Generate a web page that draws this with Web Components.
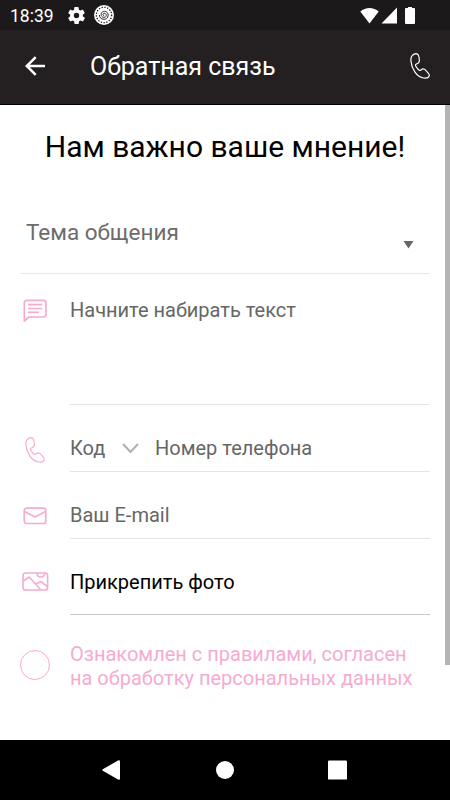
<!DOCTYPE html>
<html lang="ru">
<head>
<meta charset="utf-8">
<title>Обратная связь</title>
<style>
body{
    margin: 0;
    font-family: Roboto, "Noto Sans", sans-serif;
    background: #fff;
}
</style>
</head>
<body>
<feedback-screen></feedback-screen>

<script>
const ICONS = {
    back: `<svg width="20" height="20" viewBox="0 0 20 20" fill="none" stroke="currentColor" stroke-width="2.5"><path d="M20 10H2M10.7 1.2L1.8 10L10.7 18.8"/></svg>`,
    phone: `<svg width="20" height="26" viewBox="0 0 60 78" fill="none" stroke="currentColor" stroke-width="3.6" stroke-linejoin="round"><path d="M3 25C1 12 7 3 18 2C25 2 28 12 28 23C28 29 25 31 19 33C14 36 17 40 22 46C27 53 31 54 34 50C39 46 43 47 48 53C53 58 58 63 58 67C57 73 50 76 41 75C20 73 5 47 3 25Z"/></svg>`,
    chat: `<svg width="25" height="24" viewBox="0 0 25 24" fill="none" stroke="currentColor" stroke-width="1.7" stroke-linejoin="round"><path d="M1.3 22V4Q1.3 1.3 4 1.3H20.3Q23 1.3 23 4V15.3Q23 18 20.3 18H5.8ZM5 5.7H19.3M5 9.5H19.3M5 13.3H16"/></svg>`,
    mail: `<svg width="24" height="18" viewBox="0 0 24 18" fill="none" stroke="currentColor" stroke-width="1.7" stroke-linejoin="round"><rect x="1.2" y="1.2" width="21.6" height="15.3" rx="2.5"/><path d="M1.8 4.8L12 10L22.2 4.8"/></svg>`,
    photo: `<svg width="27" height="19" viewBox="0 0 27 19" fill="none" stroke="currentColor" stroke-width="1.6" stroke-linejoin="round"><rect x="1" y="1" width="24.6" height="17" rx="2.6"/><path d="M1.2 9L7.2 5L18.5 17.5M13.2 12L19 9.7L25.4 14.5M14.8 1.2C15.5 6.3 22 6.3 23 1.2"/></svg>`
};

class UiIcon extends HTMLElement{
    connectedCallback(){
        this.attachShadow({mode: "open"}).innerHTML = `
        <style>
        :host{ display: inline-flex; }
        svg{ display: block; }
        </style>
        ${ICONS[this.getAttribute("name")]}
        `;
    }
}

class StatusBar extends HTMLElement{
    connectedCallback(){
        this.attachShadow({mode: "open"}).innerHTML = `
        <style>
        :host{
            display: flex;
            align-items: center;
            height: 30px;
            padding: 0 35px 0 10px;
            background: #1c191a;
            color: #fff;
            font-size: 17.5px;
            box-sizing: border-box;
        }
        svg{ display: block; flex: none; }
        .time{ width: 58px; line-height: 30px; padding-top: 1px; }
        .gear{ margin-right: 9px; }
        .wifi{ margin-left: auto; }
        .signal{ margin: 0 7px 0 2px; }
        </style>
        <span class="time">18:39</span>
        <svg class="gear" width="17" height="17" viewBox="2 2 20 20" fill="currentColor"><path d="M19.4 13a7.8 7.8 0 0 0 0-2l2.1-1.6a.5.5 0 0 0 .1-.7l-2-3.4a.5.5 0 0 0-.6-.2l-2.5 1a7.3 7.3 0 0 0-1.7-1l-.4-2.6a.5.5 0 0 0-.5-.5h-4a.5.5 0 0 0-.5.5L9.200 5.100a7.7 7.7 0 0 0-1.700 1L5 5.100a.5.5 0 0 0-.6.2l-2 3.400a.5.5 0 0 0 .1.7L4.600 11a8 8 0 0 0 0 2l-2.100 1.600a.5.5 0 0 0-.1.7l2 3.400a.5.5 0 0 0 .6.2l2.500-1a7.300 7.300 0 0 0 1.700 1l.4 2.600a.5.5 0 0 0 .5.5h4a.5.5 0 0 0 .5-.5l.4-2.600a7.700 7.700 0 0 0 1.700-1l2.500 1a.5.5 0 0 0 .6-.2l2-3.400a.5.5 0 0 0-.1-.7zM12 15.200a3.200 3.200 0 1 1 0-6.400a3.200 3.200 0 0 1 0 6.400z"/></svg>
        <svg width="20" height="20" viewBox="0 0 20 20" fill="none" stroke="#fff"><circle cx="10" cy="10" r="10" fill="#fff" stroke="none"/><circle cx="10" cy="10" r="7.7" stroke="#1c191a" stroke-width="1.3" stroke-dasharray="1.3 1.5"/><path stroke="#1c191a" stroke-width=".9" d="M10 10.500C8.500 10.500 8.600 8.300 10.300 8.300C13 8.300 12.900 12.400 10 12.400C6 12.400 6.200 6.300 10.300 6.300C15.500 6.300 15.500 14.300 10 14.300C7 14.300 5.400 12.400 5.400 10"/></svg>
        <svg class="wifi" width="19" height="17" viewBox="0 0 19 17" fill="currentColor"><path d="M9.500 16.500L.3 4.500C5.500-.3 13.500-.3 18.700 4.500Z"/></svg>
        <svg class="signal" width="17" height="17" viewBox="0 0 17 17" fill="currentColor"><path d="M16 .5V16.500H.5Z"/></svg>
        <svg width="10" height="17" viewBox="0 0 10 17" fill="currentColor"><path d="M3 1V0H7V1H9Q10 1 10 2V16Q10 17 9 17H1Q0 17 0 16V2Q0 1 1 1Z"/></svg>
        `;
    }
}

class AppBar extends HTMLElement{
    connectedCallback(){
        this.attachShadow({mode: "open"}).innerHTML = `
        <style>
        :host{
            display: flex;
            align-items: center;
            height: 75px;
            padding: 0 20px 3px 25px;
            background: #242021;
            border-bottom: 1px solid #000;
            color: #fff;
            box-sizing: border-box;
        }
        .title{ flex: 1; margin-left: 45px; padding-top: 3px; font-size: 25px; line-height: 30px; }
        </style>
        <ui-icon name="back"></ui-icon>
        <span class="title"><slot></slot></span>
        <ui-icon name="phone"></ui-icon>
        `;
    }
}

class TopicSelect extends HTMLElement{
    connectedCallback(){
        this.attachShadow({mode: "open"}).innerHTML = `
        <style>
        :host{
            display: flex;
            justify-content: space-between;
            height: 84px;
            padding: 28px 16px 0 6px;
            border-bottom: 1px solid #e8e8e8;
            box-sizing: border-box;
            color: #6c6c6c;
            font-size: 22.5px;
            line-height: 28px;
        }
        svg{ margin-top: 22px; }
        </style>
        <slot></slot>
        <svg width="11" height="9" viewBox="0 0 11 9"><path d="M.5 1H10.500L5.500 8.500Z" fill="#666"/></svg>
        `;
    }
}

class FormRow extends HTMLElement{
    connectedCallback(){
        this.attachShadow({mode: "open"}).innerHTML = `
        <style>
        :host{
            display: flex;
            height: var(--h, 67px);
            color: #666;
            font-size: 20px;
            line-height: 24px;
        }
        .icon{
            width: 50px;
            display: flex;
            justify-content: center;
            padding-right: 20px;
            padding-top: var(--icon-top, 32px);
            box-sizing: border-box;
            color: #f4acd0;
        }
        .field{
            flex: 1;
            display: flex;
            padding-top: var(--top, 31px);
            border-bottom: 1px solid var(--line, #e4e4e4);
        }
        </style>
        <div class="icon"><ui-icon name="${this.getAttribute("icon")}"></ui-icon></div>
        <div class="field"><slot></slot></div>
        `;
    }
}

class PhoneInput extends HTMLElement{
    connectedCallback(){
        this.attachShadow({mode: "open"}).innerHTML = `
        <style>
        :host{ display: flex; }
        .code{ width: 52px; }
        svg{ margin: 7px 16px 0 0; }
        </style>
        <span class="code"><slot name="code"></slot></span>
        <svg width="17" height="11" viewBox="0 0 17 11" fill="none" stroke="#b0b0b0" stroke-width="2"><path d="M1 1L8.500 9L16 1"/></svg>
        <slot></slot>
        `;
    }
}

class ConsentCheck extends HTMLElement{
    connectedCallback(){
        this.attachShadow({mode: "open"}).innerHTML = `
        <style>
        :host{
            display: flex;
            padding-top: 27px;
            color: #f4acd0;
            font-size: 20px;
            line-height: 24px;
        }
        .box{
            width: 30px;
            height: 30px;
            margin: 8px 20px 0 0;
            border: 1px solid currentColor;
            border-radius: 50%;
            box-sizing: border-box;
        }
        </style>
        <div class="box"></div>
        <div><slot></slot></div>
        `;
    }
}

class NavButtons extends HTMLElement{
    connectedCallback(){
        this.attachShadow({mode: "open"}).innerHTML = `
        <style>
        :host{
            display: flex;
            align-items: center;
            justify-content: space-between;
            height: 60px;
            padding: 0 103px 0 102px;
            background: #000;
            box-sizing: border-box;
        }
        </style>
        <svg width="19" height="20" viewBox="0 0 19 20" fill="#fff"><path d="M.8 9.200L16.500.2Q18 0 18 1.200V18.800Q18 20 16.500 19.800L.8 10.800Q-.3 10 .8 9.200Z"/></svg>
        <svg width="18" height="18" viewBox="0 0 18 18" fill="#fff"><circle cx="9" cy="9" r="9"/></svg>
        <svg width="19" height="20" viewBox="0 0 19 20" fill="#fff"><rect y=".4" width="19" height="19.200" rx="1.200"/></svg>
        `;
    }
}

class FeedbackScreen extends HTMLElement{

    constructor(){
        super();
        this.attachShadow({mode: "open"});
    }

    connectedCallback(){
        this.render();
    }

    render(){
        this.shadowRoot.innerHTML = `
        <style>
        :host{
            display: flex;
            flex-direction: column;
            width: 450px;
            height: 800px;
            overflow: hidden;
        }
        main{ flex: 1; display: flex; }
        .form{ width: 410px; padding: 0 15px 0 20px; }
        .scroll{ width: 5px; height: 560px; background: #b4b4b4; }
        h1{
            margin: 0;
            height: 85px;
            padding-top: 24px;
            box-sizing: border-box;
            font-size: 30px;
            font-weight: 400;
            line-height: 36px;
            text-align: center;
            white-space: nowrap;
            color: #000;
        }
        .message{ --h: 131px; --top: 24px; --icon-top: 25px; }
        .photo{ --h: 76px; --line: #c8c8c8; --icon-top: 33px; color: #000; }
        </style>
        <status-bar></status-bar>
        <app-bar>Обратная связь</app-bar>
        <main>
            <div class="form">
                <h1>Нам важно ваше мнение!</h1>
                <topic-select>Тема общения</topic-select>
                <form-row class="message" icon="chat">Начните набирать текст</form-row>
                <form-row icon="phone">
                    <phone-input><span slot="code">Код</span>Номер телефона</phone-input>
                </form-row>
                <form-row icon="mail" style="--icon-top: 35px">Ваш E-mail</form-row>
                <form-row class="photo" icon="photo">Прикрепить фото</form-row>
                <consent-check>Ознакомлен с правилами, согласен<br>на обработку персональных данных</consent-check>
            </div>
            <div class="scroll"></div>
        </main>
        <nav-buttons></nav-buttons>
        `;
    }
}

customElements.define("ui-icon", UiIcon);
customElements.define("status-bar", StatusBar);
customElements.define("app-bar", AppBar);
customElements.define("topic-select", TopicSelect);
customElements.define("form-row", FormRow);
customElements.define("phone-input", PhoneInput);
customElements.define("consent-check", ConsentCheck);
customElements.define("nav-buttons", NavButtons);
customElements.define("feedback-screen", FeedbackScreen);
</script>
</body>
</html>
